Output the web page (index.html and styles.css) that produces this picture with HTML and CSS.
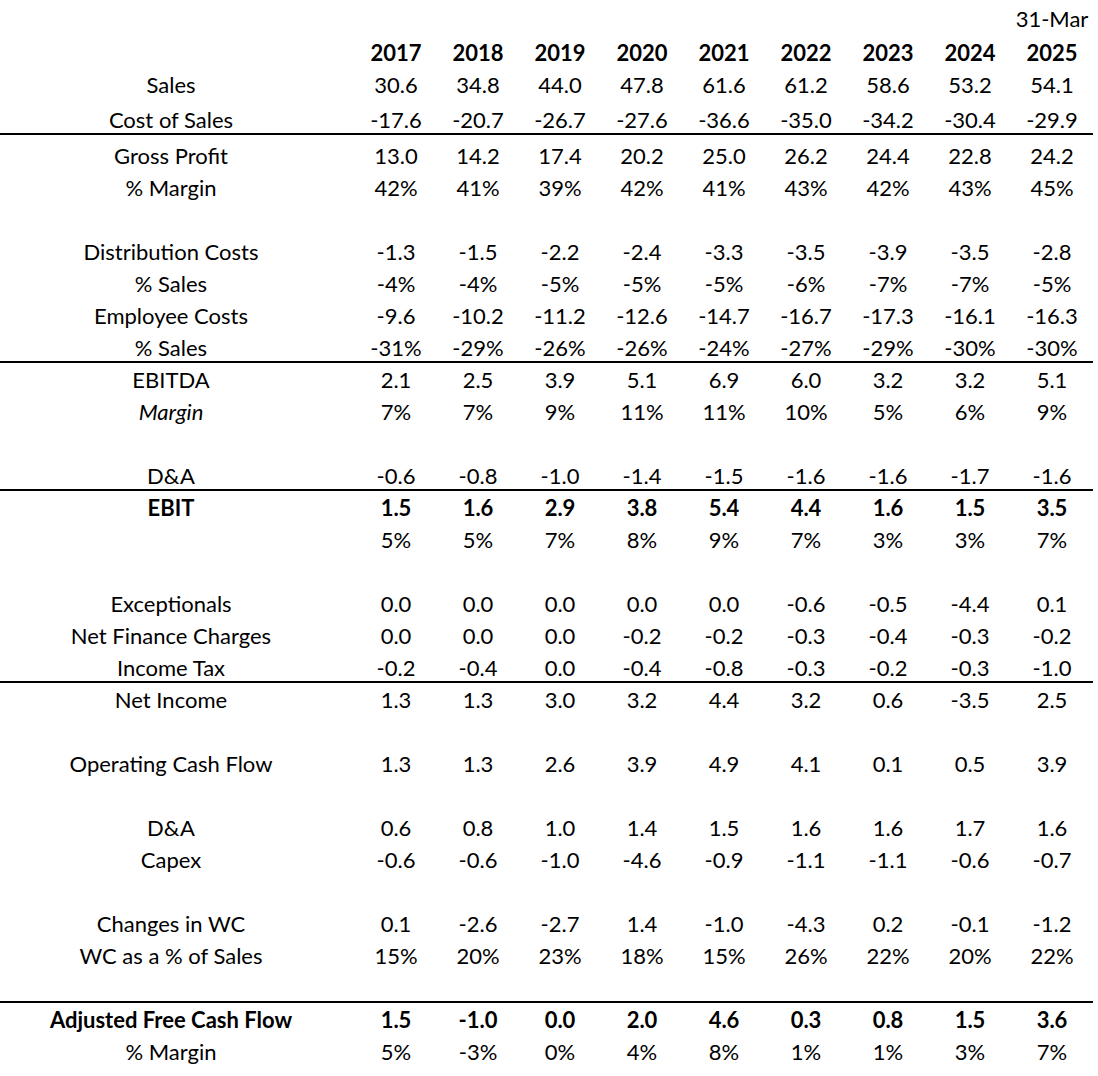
FILE: index.html
```html
<!DOCTYPE html>
<html lang="en">
<head>
<meta charset="utf-8">
<title>Financial Summary</title>
<link rel="stylesheet" href="styles.css">
</head>
<body>
<div class="sheet">
  <div class="row h34"><div class="label"></div><div></div><div></div><div></div><div></div><div></div><div></div><div></div><div></div><div>31-Mar</div></div>
  <div class="row h34 bold"><div class="label"></div><div>2017</div><div>2018</div><div>2019</div><div>2020</div><div>2021</div><div>2022</div><div>2023</div><div>2024</div><div>2025</div></div>
  <div class="row"><div class="label">Sales</div><div>30.6</div><div>34.8</div><div>44.0</div><div>47.8</div><div>61.6</div><div>61.2</div><div>58.6</div><div>53.2</div><div>54.1</div></div>
  <div class="row h35 rule"><div class="label">Cost of Sales</div><div>-17.6</div><div>-20.7</div><div>-26.7</div><div>-27.6</div><div>-36.6</div><div>-35.0</div><div>-34.2</div><div>-30.4</div><div>-29.9</div></div>
  <div class="row h36"><div class="label">Gross Profit</div><div>13.0</div><div>14.2</div><div>17.4</div><div>20.2</div><div>25.0</div><div>26.2</div><div>24.4</div><div>22.8</div><div>24.2</div></div>
  <div class="row"><div class="label">% Margin</div><div>42%</div><div>41%</div><div>39%</div><div>42%</div><div>41%</div><div>43%</div><div>42%</div><div>43%</div><div>45%</div></div>
  <div class="row"></div>
  <div class="row"><div class="label">Distribution Costs</div><div>-1.3</div><div>-1.5</div><div>-2.2</div><div>-2.4</div><div>-3.3</div><div>-3.5</div><div>-3.9</div><div>-3.5</div><div>-2.8</div></div>
  <div class="row"><div class="label">% Sales</div><div>-4%</div><div>-4%</div><div>-5%</div><div>-5%</div><div>-5%</div><div>-6%</div><div>-7%</div><div>-7%</div><div>-5%</div></div>
  <div class="row"><div class="label">Employee Costs</div><div>-9.6</div><div>-10.2</div><div>-11.2</div><div>-12.6</div><div>-14.7</div><div>-16.7</div><div>-17.3</div><div>-16.1</div><div>-16.3</div></div>
  <div class="row rule"><div class="label">% Sales</div><div>-31%</div><div>-29%</div><div>-26%</div><div>-26%</div><div>-24%</div><div>-27%</div><div>-29%</div><div>-30%</div><div>-30%</div></div>
  <div class="row"><div class="label">EBITDA</div><div>2.1</div><div>2.5</div><div>3.9</div><div>5.1</div><div>6.9</div><div>6.0</div><div>3.2</div><div>3.2</div><div>5.1</div></div>
  <div class="row"><div class="label italic">Margin</div><div>7%</div><div>7%</div><div>9%</div><div>11%</div><div>11%</div><div>10%</div><div>5%</div><div>6%</div><div>9%</div></div>
  <div class="row"></div>
  <div class="row rule"><div class="label">D&amp;A</div><div>-0.6</div><div>-0.8</div><div>-1.0</div><div>-1.4</div><div>-1.5</div><div>-1.6</div><div>-1.6</div><div>-1.7</div><div>-1.6</div></div>
  <div class="row bold"><div class="label">EBIT</div><div>1.5</div><div>1.6</div><div>2.9</div><div>3.8</div><div>5.4</div><div>4.4</div><div>1.6</div><div>1.5</div><div>3.5</div></div>
  <div class="row"><div class="label"></div><div>5%</div><div>5%</div><div>7%</div><div>8%</div><div>9%</div><div>7%</div><div>3%</div><div>3%</div><div>7%</div></div>
  <div class="row"></div>
  <div class="row"><div class="label">Exceptionals</div><div>0.0</div><div>0.0</div><div>0.0</div><div>0.0</div><div>0.0</div><div>-0.6</div><div>-0.5</div><div>-4.4</div><div>0.1</div></div>
  <div class="row"><div class="label">Net Finance Charges</div><div>0.0</div><div>0.0</div><div>0.0</div><div>-0.2</div><div>-0.2</div><div>-0.3</div><div>-0.4</div><div>-0.3</div><div>-0.2</div></div>
  <div class="row rule"><div class="label">Income Tax</div><div>-0.2</div><div>-0.4</div><div>0.0</div><div>-0.4</div><div>-0.8</div><div>-0.3</div><div>-0.2</div><div>-0.3</div><div>-1.0</div></div>
  <div class="row"><div class="label">Net Income</div><div>1.3</div><div>1.3</div><div>3.0</div><div>3.2</div><div>4.4</div><div>3.2</div><div>0.6</div><div>-3.5</div><div>2.5</div></div>
  <div class="row"></div>
  <div class="row"><div class="label">Operating Cash Flow</div><div>1.3</div><div>1.3</div><div>2.6</div><div>3.9</div><div>4.9</div><div>4.1</div><div>0.1</div><div>0.5</div><div>3.9</div></div>
  <div class="row"></div>
  <div class="row"><div class="label">D&amp;A</div><div>0.6</div><div>0.8</div><div>1.0</div><div>1.4</div><div>1.5</div><div>1.6</div><div>1.6</div><div>1.7</div><div>1.6</div></div>
  <div class="row"><div class="label">Capex</div><div>-0.6</div><div>-0.6</div><div>-1.0</div><div>-4.6</div><div>-0.9</div><div>-1.1</div><div>-1.1</div><div>-0.6</div><div>-0.7</div></div>
  <div class="row"></div>
  <div class="row"><div class="label">Changes in WC</div><div>0.1</div><div>-2.6</div><div>-2.7</div><div>1.4</div><div>-1.0</div><div>-4.3</div><div>0.2</div><div>-0.1</div><div>-1.2</div></div>
  <div class="row"><div class="label">WC as a % of Sales</div><div>15%</div><div>20%</div><div>23%</div><div>18%</div><div>15%</div><div>26%</div><div>22%</div><div>20%</div><div>22%</div></div>
  <div class="row rule"></div>
  <div class="row bold"><div class="label">Adjusted Free Cash Flow</div><div>1.5</div><div>-1.0</div><div>0.0</div><div>2.0</div><div>4.6</div><div>0.3</div><div>0.8</div><div>1.5</div><div>3.6</div></div>
  <div class="row"><div class="label">% Margin</div><div>5%</div><div>-3%</div><div>0%</div><div>4%</div><div>8%</div><div>1%</div><div>1%</div><div>3%</div><div>7%</div></div>
</div>
</body>
</html>
```

FILE: styles.css
```css
html, body {
  margin: 0;
  padding: 0;
  background: #fff;
}
body {
  font-family: Lato, "Open Sans", sans-serif;
  font-size: 22px;
  color: #000;
}
.sheet {
  width: 1093px;
}
.row {
  display: grid;
  grid-template-columns: 355px repeat(9, 82px);
  align-items: end;
  height: 32px;
  box-sizing: border-box;
  padding-bottom: 3px;
  line-height: 24px;
  text-align: center;
}
.row > div {
  white-space: nowrap;
}
.label {
  padding-right: 13px;
}
.h34 { height: 34px; }
.h35 { height: 35px; }
.h36 { height: 36px; }
.rule {
  border-bottom: 2px solid #000;
  padding-bottom: 1px;
}
.bold { font-weight: 700; }
.italic { font-style: italic; }
```
